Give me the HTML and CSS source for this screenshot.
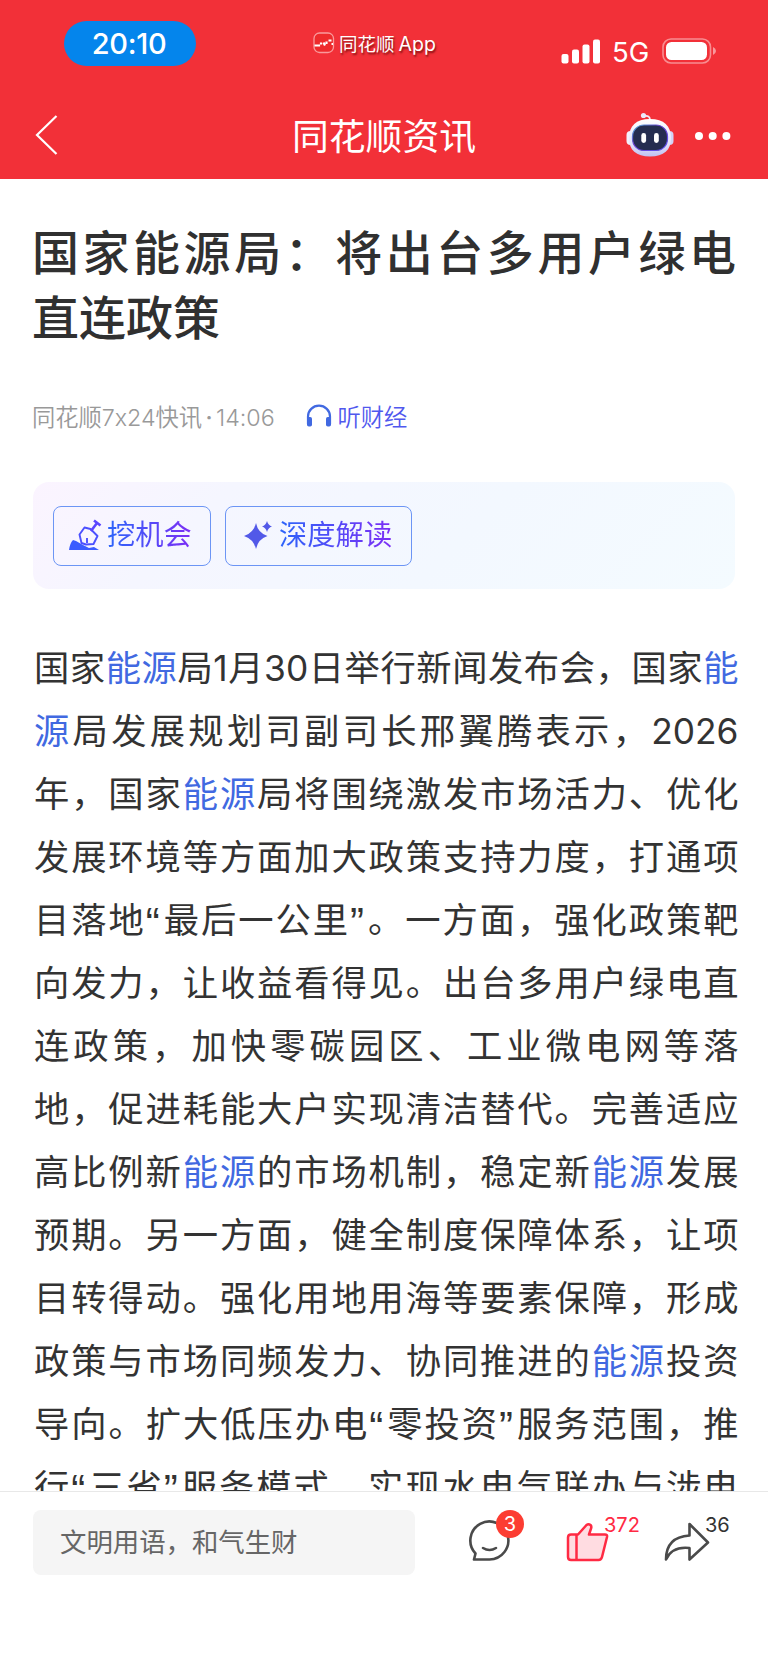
FILE: index.html
```html
<!DOCTYPE html>
<html lang="zh-CN">
<head>
<meta charset="utf-8">
<title>同花顺资讯</title>
<link rel="stylesheet" href="styles.css">
</head>
<body>
<div class="screen">
  <header class="top">
    <div class="status">
      <div class="clock">20:10</div>
      <div class="brand">
        <svg width="22" height="22" viewBox="0 0 22 22"><rect x="1" y="1" width="19.5" height="19.5" rx="5.5" fill="#ee2a2c" stroke="#f99a9c" stroke-width="1.3"/><path d="M1.500 13.500h3.500M6 14.500v-2M8 10.500v2M10.500 10.500l1.500 3M13.500 9.500v2.500M15.500 8.500h3M18.500 12h1.500" stroke="#fff" stroke-width="2.200" fill="none"/></svg>
        <span>同花顺<i>App</i></span>
      </div>
      <div class="signals">
        <svg width="40" height="25" viewBox="0 0 40 25" fill="#fff"><rect x=".5" y="15" width="7" height="9.500" rx="2"/><rect x="11" y="10.500" width="7" height="14" rx="2"/><rect x="21.500" y="5.500" width="7" height="19" rx="2"/><rect x="32" y=".5" width="7" height="24" rx="2"/></svg>
        <span class="net">5G</span>
        <svg width="55" height="26" viewBox="0 0 55 26"><rect x="1" y="1" width="47.500" height="24" rx="8" fill="none" stroke="#fff" stroke-opacity=".45" stroke-width="1.600"/><rect x="4" y="4" width="41" height="18" rx="5.500" fill="#fff"/><path d="M51 9q3 1.500 3 4t-3 4z" fill="#fff" fill-opacity=".5"/></svg>
      </div>
    </div>
    <nav class="nav">
      <svg class="back" width="24" height="42" viewBox="0 0 24 42" fill="none" stroke="#fff" stroke-width="2.200"><path d="M21.500 2 2 21l19.500 19"/></svg>
      <h1>同花顺资讯</h1>
      <div class="actions">
        <svg width="48" height="46" viewBox="0 0 48 46">
          <defs>
            <linearGradient id="shell" x1="0" y1="0" x2="0" y2="1"><stop offset="0" stop-color="#fff"/><stop offset=".65" stop-color="#e4e4fb"/><stop offset="1" stop-color="#bfc0f0"/></linearGradient>
            <linearGradient id="rim" x1="0" y1="0" x2="1" y2="1"><stop offset="0" stop-color="#52b9d8"/><stop offset=".4" stop-color="#6b3fd0"/><stop offset="1" stop-color="#5a52ee"/></linearGradient>
          </defs>
          <path d="M18 4q6-1 6 4" fill="none" stroke="#f2e9f6" stroke-width="1.800"/><circle cx="17.500" cy="3.500" r="2.600" fill="#ece9fa"/>
          <rect x=".5" y="19" width="8" height="14" rx="4" fill="#f3f0fb"/><rect x="39.500" y="19" width="8" height="14" rx="4" fill="#d3d2f5"/>
          <path d="M24 7C38 7 45 14 45 26S38 44.500 24 44.500 3 38 3 26 10 7 24 7z" fill="url(#shell)"/>
          <rect x="6.500" y="13" width="35" height="25.500" rx="11.500" fill="#252d50" stroke="url(#rim)" stroke-width="1.200"/>
          <rect x="15.300" y="21" width="4.800" height="10" rx="2.400" fill="#fff"/><rect x="28" y="21" width="4.800" height="10" rx="2.400" fill="#fff"/>
        </svg>
        <svg class="dots" width="38" height="10" viewBox="0 0 38 10" fill="#fff"><circle cx="5" cy="5" r="4"/><circle cx="18.700" cy="5" r="4"/><circle cx="32.400" cy="5" r="4"/></svg>
      </div>
    </nav>
  </header>
  <main class="article">
    <h2><span>国家能源局：将出台多用户绿电</span><span class="end">直连政策</span></h2>
    <div class="meta">
      <span>同花顺7x24快讯<b>·</b>14:06</span>
      <a class="listen"><svg width="26" height="24" viewBox="0 0 26 24"><path d="M2 20v-7.500a11 10.800 0 0 1 22 0V20" fill="none" stroke="#4169e1" stroke-width="2.200"/><rect x="1" y="13" width="5" height="9.500" rx="1.800" fill="#4169e1"/><rect x="20" y="13" width="5" height="9.500" rx="1.800" fill="#4169e1"/></svg>听财经</a>
    </div>
    <section class="tools">
      <button class="tool dig">
        <svg width="33" height="32" viewBox="0 0 33 32"><path d="M0 31q1-7 4-10l3 1 7 4 6 3 5-1 5 3z" fill="#3b5cff"/><path d="M17 25.500 12.500 24l-2-8.500 5-7 6 1.500 7 7-4 8z M18 24v-5" fill="none" stroke="#4b50ff" stroke-width="1.900" stroke-linejoin="round"/><path d="M22 12l6-8M25 1.500l6.500 5" fill="none" stroke="#5a45ff" stroke-width="2.600"/></svg>
        <span>挖机会</span>
      </button>
      <button class="tool deep">
        <svg width="29" height="28" viewBox="0 0 29 28" fill="#5259e8"><path d="M12 2q2 10 11.500 13Q14 18 12 28 9.500 18 0 15 9.500 12 12 2z"/><path d="M23 0q1.200 4.300 5 5.500-3.800 1.200-5 5.500-1.200-4.300-5-5.500 3.800-1.200 5-5.500z"/></svg>
        <span>深度解读</span>
      </button>
    </section>
    <p class="copy">
      <span>国家<a>能源</a>局1月30日举行新闻发布会，国家<a>能</a></span>
      <span><a>源</a>局发展规划司副司长邢翼腾表示，2026</span>
      <span>年，国家<a>能源</a>局将围绕激发市场活力、优化</span>
      <span>发展环境等方面加大政策支持力度，打通项</span>
      <span>目落地<i>“</i>最后一公里<i>”</i>。一方面，强化政策靶</span>
      <span>向发力，让收益看得见。出台多用户绿电直</span>
      <span>连政策，加快零碳园区、工业微电网等落</span>
      <span>地，促进耗能大户实现清洁替代。完善适应</span>
      <span>高比例新<a>能源</a>的市场机制，稳定新<a>能源</a>发展</span>
      <span>预期。另一方面，健全制度保障体系，让项</span>
      <span>目转得动。强化用地用海等要素保障，形成</span>
      <span>政策与市场同频发力、协同推进的<a>能源</a>投资</span>
      <span>导向。扩大低压办电<i>“</i>零投资<i>”</i>服务范围，推</span>
      <span>行<i>“</i>三省<i>”</i>服务模式，实现水电气联办与涉电</span>
    </p>
  </main>
  <footer class="bar">
    <div class="field">文明用语，和气生财</div>
    <div class="act comment">
      <svg width="42" height="42" viewBox="0 0 42 42" fill="none" stroke="#4a4a4a" stroke-width="2.600" stroke-linejoin="round" stroke-linecap="round"><path d="M5 39.500h15.500A19 19 0 1 0 6.500 33.500z"/><path d="M14 28q6.500 4 13 0"/></svg>
      <span class="badge">3</span>
    </div>
    <div class="act like">
      <svg width="43" height="40" viewBox="0 0 43 40" fill="#ffdce1" stroke="#ff2a43" stroke-width="2.500" stroke-linejoin="round"><path d="M5 12.500h7L20.500 3q2-1.500 4 0 1.200 1.200.7 3L23 12.500h16q2.500 0 2 2.500l-5 20q-.8 3-3.500 3H5q-3 0-3-3V15.500q0-3 3-3z"/><path d="M10.500 12.500V38" fill="none"/></svg>
      <span class="count">372</span>
    </div>
    <div class="act share">
      <svg width="46" height="40" viewBox="0 0 46 40" fill="none" stroke="#4a4a4a" stroke-width="2.600" stroke-linejoin="round"><path d="M25.500 2 44 20.500 25.500 37.500V26Q8 24 2 37.500 2 15 25.500 13.500z"/></svg>
      <span class="count">36</span>
    </div>
  </footer>
</div>
</body>
</html>
```
FILE: styles.css
```css
* { box-sizing: border-box; margin: 0; padding: 0; }
body { background: #fff; font-family: Inter, "Noto Sans CJK SC", sans-serif; color: #333; }
svg { display: block; flex: none; }
.screen { width: 768px; height: 1663px; display: flex; flex-direction: column; overflow: hidden; }

.top { height: 179px; flex: none; background: #f23038; color: #fff; }
.status { height: 93px; display: grid; grid-template-columns: 313px 1fr 207px; align-items: start; }
.clock { margin: 21px 0 0 64px; width: 132px; height: 45px; padding-right: 2px; border-radius: 23px; background: #0485ec; text-align: center; font-size: 29px; font-weight: 500; line-height: 46px; letter-spacing: -.3px; }
.brand { display: flex; gap: 4px; margin-top: 32px; font-size: 18.5px; line-height: 24px; text-shadow: 1px 2px 2px rgba(80, 0, 0, .7); }
.brand i { font-style: normal; margin-left: 4px; font-size: 19.5px; }
.signals { display: flex; align-items: center; margin-top: 38px; height: 26px; }
.net { width: 61px; padding: 1px 0 0 11px; font-size: 27.500px; line-height: 28px; }
.nav { height: 86px; display: grid; grid-template-columns: 200px 1fr 200px; align-items: center; }
.back { margin-left: 35px; margin-top: -2px; }
.nav h1 { font-size: 36.800px; font-weight: 400; line-height: 50px; text-align: center; padding-top: 1px; }
.actions { display: flex; align-items: center; gap: 20px; padding: 0 0 2px 58px; }
.dots { margin-top: 2px; }

.article { flex: none; height: 1312px; overflow: hidden; padding: 42px 32px 0 33px; }
h2 { margin-left: -1px; font-size: 47px; font-weight: 500; line-height: 64.500px; color: #303030; }
h2 span, .copy span { display: block; white-space: nowrap; text-align-last: justify; }
h2 .end { text-align-last: left; }
.meta { display: flex; align-items: center; height: 34px; margin: 49px 0 0 -1px; font-size: 23.300px; letter-spacing: -.05px; color: #999; font-weight: 350; }
.meta b { font-weight: 500; margin: 0 3.500px; }
.listen { display: flex; align-items: center; gap: 6px; margin-left: 31px; color: #5058ee; font-weight: 350; }
.tools { display: flex; gap: 14px; width: 702px; height: 107px; margin-top: 49px; padding: 24px 20px; border-radius: 16px; background: linear-gradient(135deg, #fbf4ff 0%, #f5f6ff 25%, #f3f8ff 60%, #f4fbff 100%); }
.tool { display: flex; align-items: center; gap: 5px; height: 60px; padding-bottom: 2px; border: 1.500px solid #6c95f5; border-radius: 8px; background: transparent; font: 400 28.300px/40px Inter, "Noto Sans CJK SC", sans-serif; white-space: nowrap; }
.tool span { background: linear-gradient(90deg, #2c65fa, #7c2ef5); background-clip: text; -webkit-background-clip: text; color: transparent; }
.dig { width: 158px; padding-left: 15px; }
.deep { width: 187px; padding-left: 18px; gap: 6px; }
.copy { margin: 48px -2.500px 0 1px; font-size: 35.300px; line-height: 63px; color: #333; }
.copy a { color: #4169e1; }
.copy i { font-family: "Liberation Sans", sans-serif; font-style: normal; font-size: 42px; letter-spacing: 2px; line-height: 1; vertical-align: -4px; }

.bar { height: 172px; flex: none; display: flex; align-items: flex-start; border-top: 1px solid #e8e8e8; background: #fff; padding: 18px 0 0 33px; }
.field { width: 382px; height: 65px; border-radius: 8px; background: #f5f5f5; padding-left: 27px; font-size: 26.400px; line-height: 65px; color: #666; }
.act { position: relative; margin-top: 12px; }
.comment { margin-left: 54px; margin-top: 10px; }
.like { margin-left: 55px; }
.share { margin-left: 55px; }
.badge { position: absolute; left: 27px; top: -10px; width: 28px; height: 28px; border-radius: 50%; background: #fc3d32; color: #fff; font-size: 20px; line-height: 28px; text-align: center; }
.count { position: absolute; left: 38px; top: -10px; font-size: 20px; line-height: 26px; }
.like .count { color: #ff2a43; }
.share .count { left: 41px; }
```
